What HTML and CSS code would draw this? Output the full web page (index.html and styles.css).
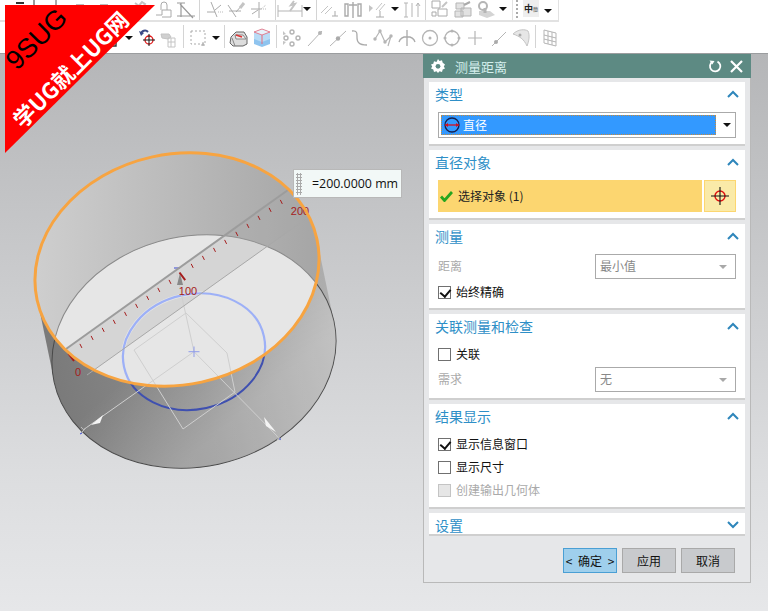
FILE: index.html
```html
<!DOCTYPE html>
<html lang="zh">
<head>
<meta charset="utf-8">
<title>测量距离</title>
<link rel="stylesheet" href="styles.css">
</head>
<body>
<header class="toolbars">
  <div class="row row1">
    <span class="slot w14"></span>
    <span class="slot w12"><svg width="8" height="5" viewBox="0 0 8 5"><path d="M0 3h8" stroke="#333" stroke-width="2"/></svg></span>
    <span class="slot w16"><svg width="6" height="6" viewBox="0 0 6 6"><path d="M3 0v6" stroke="#777" stroke-width="1.5"/></svg></span>
    <span class="slot w28"><svg width="6" height="6" viewBox="0 0 6 6"><path d="M3 0v6" stroke="#555"/></svg></span>
    <span class="slot w20"><svg width="8" height="6" viewBox="0 0 8 6"><path d="M0 5h8" stroke="#bbb" stroke-width="2"/></svg></span>
    <span class="slot w28"><svg width="8" height="6" viewBox="0 0 8 6"><path d="M0 5h8" stroke="#bbb" stroke-width="2"/></svg></span>
    <span class="slot w12"></span>
    <span class="slot w22"><svg class="ico" viewBox="0 0 20 20"><path d="M6 8l5-6 3 2-2 3M4 3l4 3" fill="none" stroke="#c4c4c4" stroke-width="2"/></svg></span>
    <span class="slot w24"><svg class="ico" viewBox="0 0 20 20"><path d="M2 15h6v-5h9v7H8M13 10V5a3 3 0 0 0-6 0v5" fill="none" stroke="#aaa"/></svg></span>
    <span class="slot w19"><svg class="ico" viewBox="0 0 20 20"><path d="M1 3h8M5 3v14M1 16h18M4 4l13 14" fill="none" stroke="#9a9a9a" stroke-width="1.2"/></svg></span>
    <span class="sep w9"></span>
    <span class="slot w22"><svg class="ico" viewBox="0 0 20 20"><path d="M2 12h8M6 2l6 15M10 10l6-5" fill="none" stroke="#aaa"/><path d="M13 12h5" stroke="#bbb" stroke-dasharray="1 1"/></svg></span>
    <span class="slot w21"><svg class="ico" viewBox="0 0 20 20"><path d="M1 5l8 12M2 11h12M9 12l7-8" fill="none" stroke="#aaa"/><path d="M13 8l4-5" stroke="#c4c4c4" stroke-width="3"/></svg></span>
    <span class="slot w23"><svg class="ico" viewBox="0 0 20 20"><path d="M10 2v16M2 9h10" stroke="#aaa"/><path d="M3 14l6-4" stroke="#aaa"/><path d="M12 9l5-4M12 9h6" stroke="#bbb" stroke-dasharray="1 1"/></svg></span>
    <span class="sep w11"></span>
    <span class="slot w18"><svg class="ico wide" viewBox="0 0 26 20"><path d="M1 5v12M25 5v12M1 11h24" fill="none" stroke="#b5b5b5"/><path d="M13 11l5-7-4 1 3-4" fill="none" stroke="#c4c4c4" stroke-width="2"/></svg></span>
    <span class="slot w15"><i class="arrow"></i></span>
    <span class="sep w5"></span>
    <span class="slot w22"><svg class="ico" viewBox="0 0 20 20"><path d="M1 13l7-7M5 14l7-7" stroke="#c4c4c4"/><path d="M12 16h6M15 11v5" stroke="#aaa"/></svg></span>
    <span class="slot w24"><svg class="ico" viewBox="0 0 20 20"><path d="M2 4h3v12H2zM15 4h3v12h-3zM10 2v16M6 5h8" fill="none" stroke="#aaa" stroke-width="1.4"/></svg></span>
    <span class="slot w24"><svg class="ico" viewBox="0 0 20 20"><path d="M2 5l4 3-4 4z" fill="#c4c4c4"/><path d="M9 10l6-7M12 11l6-7" stroke="#c4c4c4"/><path d="M9 17h8M13 11v6" stroke="#aaa"/></svg></span>
    <span class="slot w12"><i class="arrow"></i></span>
    <span class="slot w22"><svg class="ico" viewBox="0 0 20 20"><path d="M2 3h4M2 17h4M4 3v14M10 3v14M16 3v14M14 6l2-3 2 3" fill="none" stroke="#b5b5b5"/></svg></span>
    <span class="sep w5"></span>
    <span class="slot w24"><svg class="ico" viewBox="0 0 20 20"><path d="M2 1h8v7H2zM8 9h9v7H8zM2 12h4v4H2z" fill="none" stroke="#aaa"/><path d="M12 7l5-5" stroke="#c4c4c4" stroke-width="2"/></svg></span>
    <span class="slot w22"><svg class="ico" viewBox="0 0 20 20"><path d="M3 3h8v6H3zM8 8h10v8H8zM2 11h8v6H2z" fill="#e2e2e2" stroke="#b5b5b5"/><path d="M11 5l6-3" stroke="#aaa" stroke-width="2"/></svg></span>
    <span class="slot w24"><svg class="ico" viewBox="0 0 20 20"><circle cx="7" cy="6" r="4" fill="none" stroke="#b5b5b5" stroke-width="2"/><path d="M3 11h11l5 4-8 3-8-3z" fill="#d4d4d4"/><path d="M9 8v5" stroke="#b5b5b5" stroke-width="3"/></svg></span>
    <span class="slot w10"><i class="arrow"></i></span>
    <span class="lang-box">
      <span class="grip"></span>
      <span class="lang"><b>中</b><small>簡</small></span>
      <i class="arrow"></i>
    </span>
  </div>
  <div class="row row2">
    <span class="slot w100"></span>
    <span class="slot w19"><svg class="ico" viewBox="0 0 20 20"><path d="M5 9h11v9H5z" fill="none" stroke="#333" stroke-width="1.4"/></svg></span>
    <span class="slot w20"><i class="arrow"></i></span>
    <span class="slot w18"><svg class="ico" viewBox="0 0 20 20"><path d="M3 6a4 4 0 0 1 7-2" fill="none" stroke="#3b4a86" stroke-width="2"/><path d="M1 3l2 5 3-3z" fill="#3b4a86"/><circle cx="11" cy="12" r="4" fill="none" stroke="#e01818" stroke-width="1.3"/><path d="M11 6v12M5 12h12" stroke="#111"/></svg></span>
    <span class="slot w22"><svg class="ico" viewBox="0 0 20 20"><path d="M3 6h8l2 3-3 2-6-1z" fill="#d0d0d0" stroke="#c4c4c4"/><path d="M10 10h7v9h-7zM13 10v9M10 14h7" fill="none" stroke="#c4c4c4"/></svg></span>
    <span class="sep w8"></span>
    <span class="slot w22"><svg class="ico" viewBox="0 0 20 20"><path d="M3 3h14v13H3z" fill="none" stroke="#aaa" stroke-dasharray="2 2"/><path d="M15 14v4M13 17h4" stroke="#aaa"/></svg></span>
    <span class="slot w14"><i class="arrow"></i></span>
    <span class="sep w2"></span>
    <span class="slot w28"><svg class="ico" viewBox="0 0 20 20"><path d="M2 9l5-5h8l3 5v7l-4 2H4l-3-3z" fill="#ddd" stroke="#666"/><path d="M3 10l3 8M6 7h8l3 4H7z" fill="#eee" stroke="#888"/><path d="M7 7l6 2" stroke="#d33" stroke-width="1.6"/></svg></span>
    <span class="slot w18"><svg class="ico" viewBox="0 0 20 20"><path d="M2 4l8-3 8 3v12l-8 3-8-3z" fill="#8fc4ef"/><path d="M2 4l8 3 8-3v7l-8 3-8-3z" fill="#b9dcf6"/><path d="M2 4l8-3 8 3-8 3z" fill="#e8f2fb" stroke="#e76a7a" stroke-width=".8"/><path d="M10 7v9" stroke="#e76a7a"/></svg></span>
    <span class="sep w10"></span>
    <span class="slot w22"><svg class="ico" viewBox="0 0 20 20"><g fill="none" stroke="#b5b5b5" stroke-width="1.4"><circle cx="10" cy="4" r="2"/><circle cx="4" cy="10" r="2"/><circle cx="16" cy="10" r="2"/><circle cx="10" cy="16" r="2"/></g><path d="M1 3l3 3-3 1zM1 17l3-3-3-1z" fill="#c4c4c4"/></svg></span>
    <span class="slot w24"><svg class="ico" viewBox="0 0 20 20"><path d="M3 18L17 3" stroke="#b5b5b5"/><circle cx="15" cy="5" r="2" fill="#b5b5b5"/></svg></span>
    <span class="slot w22"><svg class="ico" viewBox="0 0 20 20"><path d="M2 18L18 3" stroke="#b5b5b5"/><circle cx="10" cy="10.500" r="2.200" fill="#aaa"/></svg></span>
    <span class="slot w22"><svg class="ico" viewBox="0 0 20 20"><path d="M2 3c9-1 2 8 7 12 2 2 5 2 8 2" fill="none" stroke="#aaa" stroke-width="1.3"/></svg></span>
    <span class="slot w24"><svg class="ico" viewBox="0 0 20 20"><path d="M2 11L7 3l5 11 6-6-3 10" fill="none" stroke="#b5b5b5" stroke-width="1.2"/><g fill="#b5b5b5"><circle cx="2" cy="11" r="1.700"/><circle cx="7" cy="3" r="1.700"/><circle cx="12" cy="14" r="1.700"/><circle cx="18" cy="8" r="1.700"/></g></svg></span>
    <span class="slot w24"><svg class="ico" viewBox="0 0 20 20"><path d="M2 14c2-7 14-7 16 0M10 2v16" fill="none" stroke="#aaa" stroke-width="1.3"/></svg></span>
    <span class="slot w22"><svg class="ico" viewBox="0 0 20 20"><circle cx="10" cy="10" r="7.500" fill="none" stroke="#b5b5b5" stroke-width="1.3"/><circle cx="10" cy="10" r="1.500" fill="#b5b5b5"/></svg></span>
    <span class="slot w22"><svg class="ico" viewBox="0 0 20 20"><circle cx="10" cy="10" r="7" fill="none" stroke="#b5b5b5" stroke-width="1.3"/><g fill="#b5b5b5"><circle cx="10" cy="3" r="1.500"/><circle cx="3" cy="10" r="1.500"/><circle cx="17" cy="10" r="1.500"/><circle cx="10" cy="17" r="1.500"/></g></svg></span>
    <span class="slot w24"><svg class="ico" viewBox="0 0 20 20"><path d="M10 3v14M3 10h14" stroke="#b5b5b5" stroke-width="1.200"/></svg></span>
    <span class="slot w24"><svg class="ico" viewBox="0 0 20 20"><path d="M3 18L17 4" stroke="#b5b5b5"/><circle cx="7" cy="14" r="2" fill="#aaa"/></svg></span>
    <span class="slot w22"><svg class="ico" viewBox="0 0 20 20"><path d="M1 6c5-5 12-5 15-3 2 4 1 10-1 15C12 11 7 8 1 6z" fill="#e6e6e6" stroke="#c4c4c4"/><circle cx="8" cy="7" r="1.500" fill="#aaa"/></svg></span>
    <span class="sep w4"></span>
    <span class="slot w26"><svg class="ico" viewBox="0 0 20 20"><path d="M4 2l12 3v13L4 15zM8 3v13M12 4v13M4 7l12 3M4 11l12 3" fill="none" stroke="#b5b5b5"/></svg></span>
  </div>
</header>

<main class="viewport">
  <svg class="scene" viewBox="0 54 768 557" width="768" height="557">
    <defs>
      <linearGradient id="outer" gradientUnits="userSpaceOnUse" x1="50" y1="0" x2="336" y2="0">
        <stop offset="0" stop-color="#7a7a7a"/><stop offset=".5" stop-color="#8e8e8e"/><stop offset="1" stop-color="#b0b0b0"/>
      </linearGradient>
      <linearGradient id="sheen" gradientUnits="userSpaceOnUse" x1="90" y1="380" x2="140" y2="470">
        <stop offset="0" stop-color="#fff" stop-opacity="0"/><stop offset="1" stop-color="#fff" stop-opacity=".22"/>
      </linearGradient>
      <linearGradient id="inner" gradientUnits="userSpaceOnUse" x1="35" y1="200" x2="320" y2="260">
        <stop offset="0" stop-color="#d0d0d0"/><stop offset="1" stop-color="#a6a6a6"/>
      </linearGradient>
      <clipPath id="rim"><ellipse cx="177" cy="269.500" rx="143.200" ry="115.300" transform="rotate(-12.300 177 269.500)"/></clipPath>
    </defs>

    <path d="M37 298L318 245 335 327 54 380z" fill="url(#outer)"/>
    <ellipse cx="194" cy="351.500" rx="143.200" ry="115.300" transform="rotate(-12.300 194 351.500)" fill="url(#outer)" stroke="#4a4a4a"/>
    <ellipse cx="194" cy="351.500" rx="143" ry="115" transform="rotate(-12.300 194 351.500)" fill="url(#sheen)"/>
    <ellipse cx="177" cy="269.500" rx="143.200" ry="115.300" transform="rotate(-12.300 177 269.500)" fill="url(#inner)"/>
    <g clip-path="url(#rim)">
      <ellipse cx="194" cy="351.500" rx="143.200" ry="115.300" transform="rotate(-12.300 194 351.500)" fill="#e6e6e6" stroke="#8a8a8a"/>
      <path d="M66 349L288 190 307 218 87 375z" fill="#a8a8a8" fill-opacity=".28"/>
    </g>

    <ellipse cx="194" cy="351.700" rx="71.600" ry="57.600" transform="rotate(-12.300 194 351.700)" fill="none" stroke="#3f50b0" stroke-width="2"/>
    <g clip-path="url(#rim)" fill="none">
      <ellipse cx="194" cy="351.700" rx="71.600" ry="57.600" transform="rotate(-12.300 194 351.700)" stroke="#e6e6e6" stroke-width="3.600"/>
      <ellipse cx="194" cy="351.700" rx="71.600" ry="57.600" transform="rotate(-12.300 194 351.700)" stroke="#9db0f7" stroke-width="2.200"/>
    </g>

    <g fill="none" stroke="#cfcfcf">
      <path d="M186 313L134 350 183 429 235 392 227 353z"/>
      <path d="M194 351.700L83 430M194 351.700L280 439M194 351.700L176 270"/>
    </g>
    <path d="M91 425l12-10-3 8z" fill="#f4f4f4"/>
    <path d="M276 432l-12-15 2 9z" fill="#f4f4f4"/>
    <path d="M177 285l3-12 3 12z" fill="#888"/>
    <path d="M81 433l6-6M81 427l3 3M277 440l5-6M276 436l5 4" stroke="#bbb" fill="none"/>
    <path d="M188.500 351.700h11M194 346.500v10.500" stroke="#8f9cea"/>
    <path d="M174 268h6M82 433l-2 1M279 439h2" stroke="#3a48d0"/>

    <path d="M66 349L288 190" stroke="#9c9c9c" stroke-width="2"/>
    <path d="M87 375L307 218" stroke="#a8a8a8"/>

    <g stroke="#a51c1c">
      <path transform="translate(-1.200 -2.800)" d="M81.100 346.700l2 4M92.300 338.700l2 4M103.400 330.700l2 4M114.500 322.700l2 4M125.700 314.700l2 4M136.800 306.700l2 4M147.900 298.700l2 4M159 290.700l2 4M170.200 282.700l2 4M192.400 266.700l2 4M203.600 258.700l2 4M214.700 250.700l2 4M225.800 242.700l2 4M237 234.700l2 4M248.100 226.700l2 4M259.200 218.700l2 4M270.300 210.700l2 4M281.500 202.700l2 4"/>
      <path d="M68.300 353.300l5.700 7.700M179.500 272.500l5.700 7.700" stroke-width="2"/>
    </g>
    <text class="ruler-label" x="78" y="376" text-anchor="middle">0</text>
    <text class="ruler-label" x="188" y="295" text-anchor="middle">100</text>
    <text class="ruler-label" x="300" y="215" text-anchor="middle">200</text>

    <ellipse cx="177" cy="269.500" rx="143.200" ry="115.300" transform="rotate(-12.300 177 269.500)" fill="none" stroke="#f7a441" stroke-width="3"/>
  </svg>

  <div class="measure-tag">
    <span class="tag-grip"></span>
    <span class="tag-value">=200.0000 mm</span>
  </div>

  <aside class="dialog">
    <div class="dialog-title">
      <svg class="title-gear" width="16" height="16" viewBox="0 0 16 16"><path d="M8 1l1.500 2 2.500-.7.700 2.500L15 6.500 13.800 8.500 15 10.500l-2.300 1-.7 2.500-2.500-.7L8 15l-1.500-1.700-2.500.7-.7-2.500-2.300-1L2.200 8.500 1 6.500l2.300-.7.700-2.500 2.500.7z" fill="#fff"/><circle cx="8" cy="8.300" r="2.400" fill="#5d8a83"/></svg>
      <span class="title-text">测量距离</span>
      <svg width="14" height="14" viewBox="0 0 14 14"><path d="M9.500 2.600a5.200 5.200 0 1 1-5 .2" fill="none" stroke="#fff" stroke-width="1.800"/><path d="M1.500 1.500l5 .6-2.200 3.500z" fill="#fff"/></svg>
      <svg class="title-x" width="13" height="13" viewBox="0 0 13 13"><path d="M1 1l11 11M12 1L1 12" stroke="#fff" stroke-width="2.200"/></svg>
    </div>

    <section class="sec sec-type">
      <div class="sec-head"><span>类型</span><svg class="chev" width="12" height="8" viewBox="0 0 12 8"><path d="M1 7l5-5 5 5" fill="none" stroke="#2e86bb" stroke-width="2"/></svg></div>
      <div class="combo">
        <div class="combo-value">
          <svg width="18" height="18" viewBox="0 0 18 18"><circle cx="9" cy="9" r="7" fill="none" stroke="#142050" stroke-width="1.300"/><path d="M2 9h14" stroke="#d01020" stroke-width="1.300"/><path d="M2 9l3-2v4zM16 9l-3-2v4z" fill="#d01020"/></svg>
          <span>直径</span>
        </div>
        <i class="arrow combo-arrow"></i>
      </div>
    </section>

    <section class="sec sec-select">
      <div class="sec-head"><span>直径对象</span><svg class="chev" width="12" height="8" viewBox="0 0 12 8"><path d="M1 7l5-5 5 5" fill="none" stroke="#2e86bb" stroke-width="2"/></svg></div>
      <div class="pick-row">
        <div class="pick-label">
          <svg width="13" height="12" viewBox="0 0 13 12"><path d="M1 6.500l3.500 4L12 2" fill="none" stroke="#25a51f" stroke-width="2.800"/></svg>
          <span>选择对象 (1)</span>
        </div>
        <div class="pick-btn">
          <svg width="22" height="22" viewBox="0 0 22 22"><circle cx="11" cy="11" r="5" fill="none" stroke="#e01010" stroke-width="1.400"/><path d="M11 2v18M2 11h18" stroke="#111" stroke-width="1.100"/></svg>
        </div>
      </div>
    </section>

    <section class="sec sec-measure">
      <div class="sec-head"><span>测量</span><svg class="chev" width="12" height="8" viewBox="0 0 12 8"><path d="M1 7l5-5 5 5" fill="none" stroke="#2e86bb" stroke-width="2"/></svg></div>
      <div class="field">
        <span class="field-label">距离</span>
        <div class="select"><span>最小值</span><i class="arrow light"></i></div>
      </div>
      <label class="check check-first"><span class="box on"></span><span class="check-text">始终精确</span></label>
    </section>

    <section class="sec sec-assoc">
      <div class="sec-head"><span>关联测量和检查</span><svg class="chev" width="12" height="8" viewBox="0 0 12 8"><path d="M1 7l5-5 5 5" fill="none" stroke="#2e86bb" stroke-width="2"/></svg></div>
      <label class="check check-assoc"><span class="box"></span><span class="check-text">关联</span></label>
      <div class="field field-assoc">
        <span class="field-label">需求</span>
        <div class="select"><span>无</span><i class="arrow light"></i></div>
      </div>
    </section>

    <section class="sec sec-result">
      <div class="sec-head"><span>结果显示</span><svg class="chev" width="12" height="8" viewBox="0 0 12 8"><path d="M1 7l5-5 5 5" fill="none" stroke="#2e86bb" stroke-width="2"/></svg></div>
      <label class="check check-result"><span class="box on"></span><span class="check-text">显示信息窗口</span></label>
      <label class="check check-result"><span class="box"></span><span class="check-text">显示尺寸</span></label>
      <label class="check check-result off"><span class="box"></span><span class="check-text">创建输出几何体</span></label>
    </section>

    <section class="sec sec-settings">
      <div class="sec-head short"><span>设置</span><svg class="chev" width="12" height="8" viewBox="0 0 12 8"><path d="M1 1l5 5 5-5" fill="none" stroke="#2e86bb" stroke-width="2"/></svg></div>
    </section>

    <div class="actions">
      <button class="btn primary" type="button">&lt; 确定 &gt;</button>
      <button class="btn" type="button">应用</button>
      <button class="btn" type="button">取消</button>
    </div>
  </aside>

  <div class="banner">
    <span class="banner-brand">9SUG</span>
    <span class="banner-slogan">学UG就上UG网</span>
  </div>
</main>
</body>
</html>
```
FILE: styles.css
```css
* { box-sizing: border-box; }
html, body { margin: 0; padding: 0; }
body {
  width: 768px;
  height: 611px;
  overflow: hidden;
  background: #e6e7e9;
  font-family: "Noto Sans CJK SC", "Liberation Sans", sans-serif;
  font-size: 12px;
  color: #222;
}

/* toolbars */
.toolbars { height: 54px; background: #fff; border-bottom: 1px solid #9b9d9f; }
.row { display: flex; align-items: center; }
.row1 { width: 559px; height: 22px; border-bottom: 2px solid #e2e2e2; border-right: 1px solid #e2e2e2; overflow: hidden; }
.row2 { height: 31px; }
.slot { display: flex; align-items: center; justify-content: center; flex: none; height: 100%; }
.row1 .slot { align-items: flex-start; }
.row1 .slot .arrow { margin-top: 7px; }
.row2 .slot { padding-top: 1px; }
.sep { flex: none; height: 100%; position: relative; }
.sep::before { content: ""; display: block; width: 1px; height: 100%; margin: 0 auto; background: #d4d4d4; }
.row2 .sep::before { height: 23px; margin-top: 3px; }
.ico { width: 20px; height: 20px; flex: none; display: block; }
.ico.wide { width: 26px; }
.arrow { display: block; flex: none; width: 0; height: 0; border-left: 4px solid transparent; border-right: 4px solid transparent; border-top: 4px solid #111; }
.arrow.light { border-top-color: #a8a8a8; }
.w2 { width: 2px; } .w4 { width: 4px; } .w5 { width: 5px; } .w8 { width: 8px; } .w9 { width: 9px; }
.w10 { width: 10px; } .w11 { width: 11px; } .w12 { width: 12px; } .w14 { width: 14px; } .w15 { width: 15px; }
.w16 { width: 16px; } .w18 { width: 18px; } .w19 { width: 19px; } .w20 { width: 20px; } .w21 { width: 21px; }
.w22 { width: 22px; } .w23 { width: 23px; } .w24 { width: 24px; } .w26 { width: 26px; } .w28 { width: 28px; }
.w100 { width: 100px; }

.lang-box { flex: none; margin-left: 4px; width: 44px; height: 100%; display: flex; align-items: flex-start; border-left: 1px solid #e2e2e2; }
.grip { width: 2px; height: 18px; margin: 0 0 0 3px; background: repeating-linear-gradient(#aaa 0 2px, transparent 2px 4px); flex: none; }
.lang { flex: none; margin: 0 0 0 5px; width: 16px; height: 17px; background: #eee; display: flex; align-items: center; justify-content: center; line-height: 1; }
.lang b { font-size: 9px; color: #222; }
.lang small { font-size: 5px; color: #555; }
.lang-box .arrow { margin: 9px 0 0 5px; }

/* viewport */
.viewport { position: relative; height: 557px; background: linear-gradient(#b5b6b8, #c2c3c5 25%, #dcdddf 75%, #e6e7e9); }
.scene { position: absolute; left: 0; top: 0; display: block; }
.ruler-label { font: 11px "Liberation Sans", sans-serif; fill: #a51c1c; }

.measure-tag {
  position: absolute; left: 293px; top: 115px; width: 109px; height: 29px;
  background: #f2f8f7; border: 1px solid #b8b8b8;
  display: flex; align-items: center;
}
.tag-grip { width: 6px; height: 22px; margin-left: 2px; background: radial-gradient(circle, #aaa 1px, transparent 1.300px) 0 0 / 3px 3px; flex: none; }
.tag-value { margin-left: 10px; font: 12.400px "Open Sans", "Liberation Sans", sans-serif; color: #111; white-space: nowrap; }

/* banner: the triangle is its own layer so the text is not clipped with it */
.banner { position: absolute; left: 5px; top: -49px; width: 150px; height: 148px; }
.banner::before {
  content: ""; position: absolute; inset: 0;
  background: #f00;
  clip-path: polygon(0 0, 100% 0, 0 100%);
}
.banner-brand {
  position: absolute; left: -6px; top: 19px; width: 75px; text-align: center;
  font: 27px/30px "Liberation Sans", sans-serif; color: #000;
  transform: rotate(-45deg); white-space: nowrap;
}
.banner-slogan {
  position: absolute; left: -11px; top: 52px; width: 148px; text-align: center;
  font: bold 22px/26px "Noto Sans CJK SC", sans-serif; color: #fff;
  transform: rotate(-45deg); white-space: nowrap;
}

/* dialog */
.dialog {
  position: absolute; left: 423px; top: 0; width: 328px; height: 529px;
  background: #e6e7e9; border: 1px solid #b9b9b9; border-top: 0;
  display: flex; flex-direction: column; gap: 4px; padding: 0 5px;
}
.dialog-title {
  margin: 0 -6px; height: 24px; background: #5d8a83; color: #fff;
  display: flex; align-items: center; padding: 0 8px 0 7px;
}
.title-gear { flex: none; }
.title-text { flex: 1; margin-left: 9px; font-size: 13px; color: #d6f0ee; }
.title-x { margin-left: 8px; }

.sec { background: #fff; border-bottom: 2px solid #cfcfcf; padding: 0 9px; flex: none; }
.sec-head { height: 26px; padding-bottom: 2px; display: flex; align-items: center; justify-content: space-between; font-size: 14px; color: #2e8fc7; margin-left: -3px; margin-right: -3px; }
.sec-head.short { height: 24px; padding-bottom: 0; }
.chev { flex: none; }

.sec-type { height: 64px; }
.combo { margin-top: 4px; height: 26px; border: 1px solid #aaa; padding: 2px; display: flex; align-items: center; }
.combo-value { width: 275px; height: 20px; background: #3399ff; outline: 1px dotted #c78a3c; outline-offset: -1px; color: #fff; display: flex; align-items: center; gap: 2px; padding-left: 2px; }
.combo-value span { margin-top: -2px; }
.combo-arrow { margin-left: 7px; }

.sec-select { height: 70px; }
.pick-row { margin-top: 4px; display: flex; gap: 2px; height: 32px; }
.pick-label { width: 264px; background: #fcd670; display: flex; align-items: center; gap: 5px; padding-left: 2px; }
.pick-label span { margin-top: -2px; }
.pick-btn { width: 32px; background: #faeaa8; border: 1px solid #fcd670; display: flex; align-items: center; justify-content: center; }

.sec-measure { height: 86px; }
.sec-assoc { height: 86px; }
.sec-result { height: 105px; }
.sec-settings { height: 23px; }

.field { margin-top: 4px; display: flex; align-items: center; justify-content: space-between; height: 25px; }
.field > .field-label, .select > span { margin-top: -2px; }
.field-assoc { margin-top: 6px; }
.field-label { color: #aaa; }
.select { width: 141px; height: 25px; border: 1px solid #aaa; display: flex; align-items: center; justify-content: space-between; padding: 0 8px 0 4px; color: #888; }

.check { display: flex; align-items: center; gap: 5px; height: 13px; color: #111; line-height: 13px; }
.check-text { margin-top: -2px; }
.check-first { margin-top: 7px; }
.check-assoc { margin-top: 8px; }
.check-result { margin-top: 8px; }
.check-result + .check-result { margin-top: 10px; }
.box { width: 13px; height: 13px; border: 1px solid #707070; background: #fff; flex: none; position: relative; }
.box.on::after { content: ""; position: absolute; left: 3px; top: 0; width: 5px; height: 8px; border: solid #111; border-width: 0 2px 2px 0; transform: rotate(40deg); }
.check.off { color: #aaa; }
.check.off .box { background: #e6e6e6; border-color: #c4c4c4; }

.actions { display: flex; justify-content: flex-end; gap: 5px; margin-top: 8px; padding-right: 10px; }
.btn { width: 54px; height: 25px; padding: 0; background: #c8cacd; border: 1px solid #a9a9a9; font: 12px "Noto Sans CJK SC", sans-serif; color: #111; white-space: nowrap; }
.btn.primary { background: #9fcfec; border-color: #4a9fd4; word-spacing: 3px; }
```
